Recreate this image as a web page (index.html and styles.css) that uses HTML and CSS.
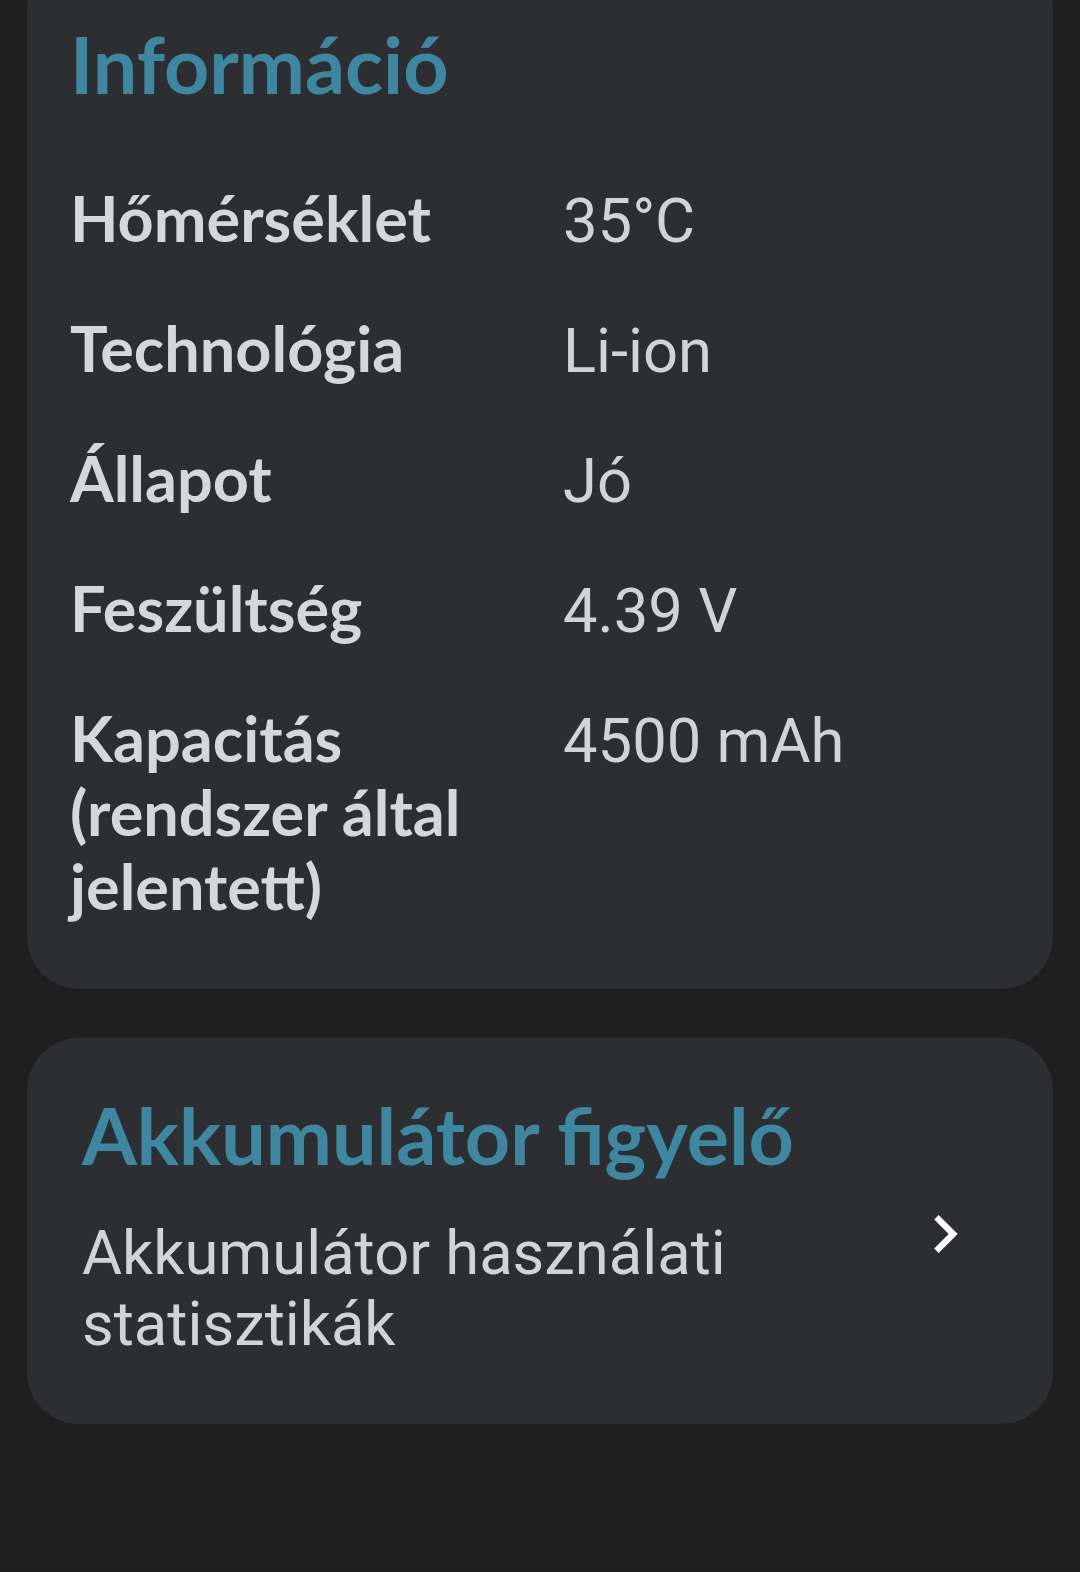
FILE: index.html
```html
<html>
<head>
    <title>Akkumulátor</title>
    <link rel="stylesheet" href="styles.css">
</head>
<body>
    <div class="screen">
        <section class="card info">
            <h2 class="card-title">Információ</h2>
            <div class="info-grid">
                <div class="label">Hőmérséklet</div>
                <div class="value">35°C</div>
                <div class="label">Technológia</div>
                <div class="value">Li-ion</div>
                <div class="label">Állapot</div>
                <div class="value">Jó</div>
                <div class="label">Feszültség</div>
                <div class="value">4.39 V</div>
                <div class="label">Kapacitás (rendszer által jelentett)</div>
                <div class="value">4500 mAh</div>
            </div>
        </section>

        <section class="card monitor">
            <div class="monitor-text">
                <h2 class="card-title">Akkumulátor figyelő</h2>
                <p class="monitor-sub">Akkumulátor használati statisztikák</p>
            </div>
            <svg class="chevron" viewBox="0 0 24 24">
                <path d="M10 6L8.59 7.41 13.17 12l-4.58 4.59L10 18l6-6z" fill="#ffffff"/>
            </svg>
        </section>
    </div>
</body>
</html>
```

FILE: styles.css
```css
body {
    margin: 0;
    background: #1f1f1f;
    font-family: Lato, "Noto Sans", sans-serif;
    color: #d5d6d8;
    overflow: hidden;
}

.screen {
    display: flex;
    flex-direction: column;
    gap: 49px;
    padding: 0 27px;
}

.card {
    background: #2d2e32;
    border-radius: 52px;
}

.card-title {
    margin: 0;
    font-family: Lato, sans-serif;
    font-weight: bold;
    font-size: 79px;
    line-height: 96px;
    color: #3e87a1;
}

.info {
    margin-top: -45px;
    padding: 61px 40px 66px 43px;
}

.info .card-title {
    margin-bottom: 69px;
}

.info-grid {
    display: grid;
    grid-template-columns: 471px 1fr;
    column-gap: 22px;
    row-gap: 53px;
    align-items: baseline;
}

.label {
    font-family: Lato, sans-serif;
    font-weight: bold;
    font-size: 63px;
    line-height: 74px;
    color: #d6d7d9;
}

.value {
    font-family: Roboto, sans-serif;
    font-size: 61.5px;
    line-height: 74px;
    color: #d2d3d5;
}

.monitor {
    display: flex;
    align-items: center;
    justify-content: space-between;
    padding: 49px 70px 64px 55px;
}

.monitor-sub {
    margin: 35px 0 0 0;
    font-family: Roboto, sans-serif;
    font-size: 61.5px;
    line-height: 71px;
    color: #d2d3d5;
    max-width: 720px;
}

.chevron {
    width: 76px;
    height: 76px;
    flex-shrink: 0;
    margin-top: 20px;
}
```
